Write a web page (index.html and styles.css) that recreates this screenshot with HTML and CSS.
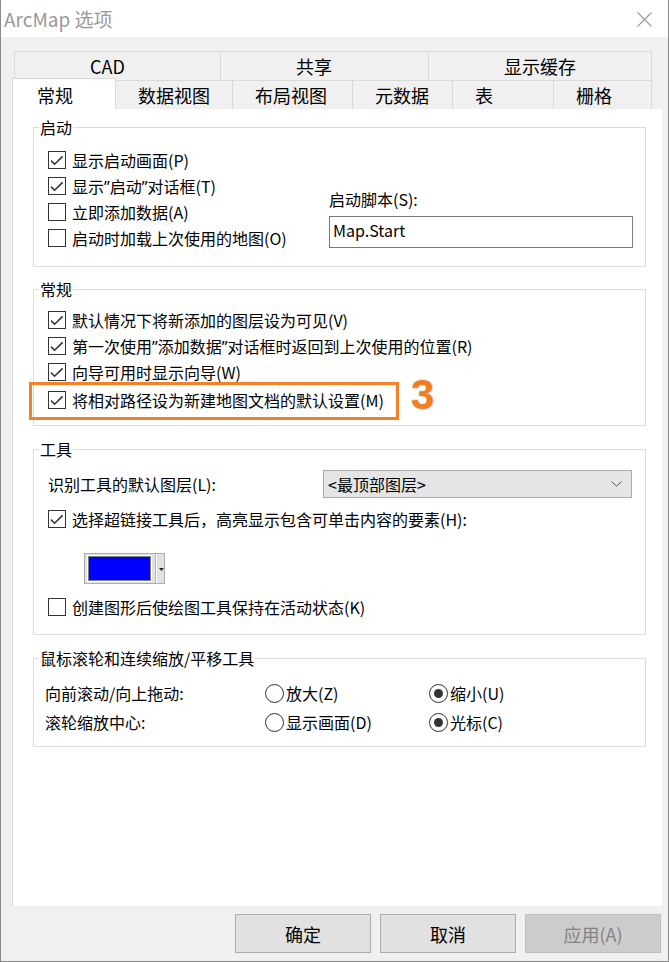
FILE: index.html
```html
<!DOCTYPE html>
<html lang="zh-CN">
<head>
<meta charset="utf-8">
<title>ArcMap 选项</title>
<link rel="stylesheet" href="styles.css">
</head>
<body>
<div class="window">
  <div class="titlebar">
    <span class="title">ArcMap 选项</span>
    <svg class="close" width="15" height="15" viewBox="0 0 15 15"><path d="M0.5 0.5 L14.5 14.5 M14.5 0.5 L0.5 14.5" stroke="#9a9a9a" stroke-width="1.1" fill="none"/></svg>
  </div>
  <div class="client">
    <div class="tabrow row1">
      <div class="tab first w-cad">CAD</div>
      <div class="tab w-share">共享</div>
      <div class="tab w-cache">显示缓存</div>
    </div>
    <div class="tabrow row2">
      <div class="tab first active w-general">常规</div>
      <div class="tab w-dataview">数据视图</div>
      <div class="tab w-layout">布局视图</div>
      <div class="tab w-meta">元数据</div>
      <div class="tab w-table">表</div>
      <div class="tab w-raster">栅格</div>
    </div>
    <div class="panel">
      <fieldset class="group g-startup">
        <legend>启动</legend>
        <div class="group-body startup-body">
          <div class="col-left">
            <div class="cb-row"><span class="cb checked"><svg width="16" height="16" viewBox="0 0 16 16"><path d="M2 8.6 L5.6 12.2 L13.6 4.4" stroke="#333" stroke-width="1.6" fill="none"/></svg></span><span>显示启动画面(P)</span></div>
            <div class="cb-row"><span class="cb checked"><svg width="16" height="16" viewBox="0 0 16 16"><path d="M2 8.6 L5.6 12.2 L13.6 4.4" stroke="#333" stroke-width="1.6" fill="none"/></svg></span><span>显示<span class="q">”</span>启动<span class="q">”</span>对话框(T)</span></div>
            <div class="cb-row"><span class="cb"></span><span>立即添加数据(A)</span></div>
            <div class="cb-row"><span class="cb"></span><span>启动时加载上次使用的地图(O)</span></div>
          </div>
          <div class="col-right">
            <div class="field-label">启动脚本(S):</div>
            <div class="textbox">Map.Start</div>
          </div>
        </div>
      </fieldset>

      <fieldset class="group g-general">
        <legend>常规</legend>
        <div class="group-body general-body">
          <div class="cb-row"><span class="cb checked"><svg width="16" height="16" viewBox="0 0 16 16"><path d="M2 8.6 L5.6 12.2 L13.6 4.4" stroke="#333" stroke-width="1.6" fill="none"/></svg></span><span>默认情况下将新添加的图层设为可见(V)</span></div>
          <div class="cb-row"><span class="cb checked"><svg width="16" height="16" viewBox="0 0 16 16"><path d="M2 8.6 L5.6 12.2 L13.6 4.4" stroke="#333" stroke-width="1.6" fill="none"/></svg></span><span>第一次使用<span class="q">”</span>添加数据<span class="q">”</span>对话框时返回到上次使用的位置(R)</span></div>
          <div class="cb-row"><span class="cb checked"><svg width="16" height="16" viewBox="0 0 16 16"><path d="M2 8.6 L5.6 12.2 L13.6 4.4" stroke="#333" stroke-width="1.6" fill="none"/></svg></span><span>向导可用时显示向导(W)</span></div>
          <div class="cb-row highlighted-row">
            <span class="cb checked"><svg width="16" height="16" viewBox="0 0 16 16"><path d="M2 8.6 L5.6 12.2 L13.6 4.4" stroke="#333" stroke-width="1.6" fill="none"/></svg></span><span>将相对路径设为新建地图文档的默认设置(M)</span>
            <span class="highlight"></span>
            <span class="step">3</span>
          </div>
        </div>
      </fieldset>

      <fieldset class="group g-tools">
        <legend>工具</legend>
        <div class="group-body tools-body">
          <div class="select-row">
            <span class="select-label">识别工具的默认图层(L):</span>
            <div class="select"><span>&lt;最顶部图层&gt;</span><svg width="11" height="6" viewBox="0 0 11 6"><path d="M0.5 0.5 L5.5 5.2 L10.5 0.5" stroke="#555" stroke-width="1" fill="none"/></svg></div>
          </div>
          <div class="cb-row row-link"><span class="cb checked"><svg width="16" height="16" viewBox="0 0 16 16"><path d="M2 8.6 L5.6 12.2 L13.6 4.4" stroke="#333" stroke-width="1.6" fill="none"/></svg></span><span>选择超链接工具后，高亮显示包含可单击内容的要素(H):</span></div>
          <div class="color-btn">
            <span class="swatch"></span>
            <span class="divider"></span>
            <svg class="arrow" width="5" height="3" viewBox="0 0 5 3"><path d="M0 0 L5 0 L2.5 3 Z" fill="#222"/></svg>
          </div>
          <div class="cb-row row-keep"><span class="cb"></span><span>创建图形后使绘图工具保持在活动状态(K)</span></div>
        </div>
      </fieldset>

      <fieldset class="group g-wheel">
        <legend>鼠标滚轮和连续缩放/平移工具</legend>
        <div class="group-body wheel-body">
          <div class="radio-row">
            <span class="radio-label">向前滚动/向上拖动:</span>
            <span class="radio-opt"><span class="radio"></span>放大(Z)</span>
            <span class="radio-opt"><span class="radio on"></span>缩小(U)</span>
          </div>
          <div class="radio-row second">
            <span class="radio-label">滚轮缩放中心:</span>
            <span class="radio-opt"><span class="radio"></span>显示画面(D)</span>
            <span class="radio-opt"><span class="radio on"></span>光标(C)</span>
          </div>
        </div>
      </fieldset>
    </div>
    <div class="footer">
      <button class="btn">确定</button>
      <button class="btn">取消</button>
      <button class="btn disabled">应用(A)</button>
    </div>
  </div>
</div>
</body>
</html>
```

FILE: styles.css
```css
* { box-sizing: border-box; }
html, body { margin: 0; padding: 0; background: #ffffff; }
body {
  font-family: "Noto Sans CJK SC", "Noto Sans", sans-serif;
  font-size: 16px;
  color: #000;
}
.window {
  width: 669px;
  height: 962px;
  border-left: 1px solid #8a8a8a;
  border-right: 1px solid #8a8a8a;
  border-bottom: 1px solid #8a8a8a;
  background: #f0f0f0;
  overflow: hidden;
}
.titlebar {
  height: 37px;
  background: #ffffff;
  display: flex;
  align-items: center;
  justify-content: space-between;
  padding: 0 16px 0 3px;
}
.title {
  font-size: 19px;
  color: #999999;
  line-height: 37px;
}
.close { display: block; margin-top: 1px; }

.client {
  height: 924px;
  padding-top: 14px;
}
.tabrow { display: flex; }
.row1 { margin-left: 13px; height: 29px; }
.row2 { margin-left: 11px; height: 31px; margin-top: -2px; align-items: flex-end; }
.tab {
  height: 29px;
  border-top: 1px solid #d9d9d9;
  border-right: 1px solid #d9d9d9;
  background: #f0f0f0;
  font-size: 18px;
  line-height: 28px;
  white-space: nowrap;
}
.tab.first { border-left: 1px solid #d9d9d9; }
.row1 .tab { padding-left: 75px; }
.row2 .tab { padding-left: 22px; }
.tab.active {
  height: 31px;
  background: #ffffff;
  padding-top: 2px;
  padding-left: 24px;
  position: relative;
  z-index: 1;
}
.w-cad { width: 207px; }
.w-share { width: 208px; }
.w-cache { width: 223px; }
.w-general { width: 104px; }
.w-dataview { width: 117px; }
.w-layout { width: 120px; }
.w-meta { width: 100px; }
.w-table { width: 101px; }
.w-raster { width: 98px; }

.panel {
  margin-left: 11px;
  width: 650px;
  height: 797px;
  background: #ffffff;
  border-left: 1px solid #d9d9d9;
  padding: 9px 0 0 20px;
}

.group {
  width: 613px;
  margin: 0;
  border: 1px solid #dcdcdc;
  padding: 0 0 0 5px;
  min-width: 0;
}
.group legend {
  font-size: 16px;
  line-height: 18px;
  padding: 0 1px;
}
.group-body { margin-left: 9px; }

.g-general { margin-top: 13px; }
.g-tools { margin-top: 14px; }
.g-wheel { margin-top: 14px; }

.startup-body { display: flex; padding: 11px 0 15px; }
.col-left { width: 281px; }
.col-right { width: 304px; padding-top: 39px; }
.field-label { line-height: 26px; height: 26px; }
.textbox {
  margin-top: 4px;
  height: 32px;
  border: 1px solid #7a7a7a;
  padding: 2px 3px 0;
  line-height: 22px;
  background: #fff;
}

.cb-row {
  display: flex;
  align-items: center;
  height: 26px;
  line-height: 26px;
  white-space: nowrap;
}
.cb {
  width: 18px;
  height: 18px;
  border: 1px solid #333333;
  background: #ffffff;
  margin-right: 6px;
  flex: none;
}
.cb svg { display: block; }
.q { font-family: "Noto Sans", sans-serif; }

.general-body { padding: 9px 0 12px; }
.highlighted-row { position: relative; margin-top: 2px; }
.highlight {
  position: absolute;
  left: -19px;
  top: -5px;
  width: 370px;
  height: 38px;
  border: 3px solid #f58025;
}
.step {
  position: absolute;
  left: 363px;
  top: -13px;
  font-family: "Liberation Sans", Arial, sans-serif;
  font-weight: bold;
  font-size: 42px;
  line-height: 42px;
  color: #f47b20;
  text-shadow: 1px 0 0 #e6e6e6, -1px 0 0 #e6e6e6, 0 1px 0 #e6e6e6, 0 -1px 0 #e6e6e6;
}

.tools-body { padding: 12px 0 14px; }
.select-row { display: flex; align-items: center; height: 28px; }
.select-label { width: 275px; line-height: 26px; }
.select {
  width: 309px;
  height: 28px;
  background: #e5e5e5;
  border: 1px solid #adadad;
  display: flex;
  align-items: center;
  justify-content: space-between;
  padding: 0 9px 0 4px;
  line-height: 26px;
}
.select svg { display: block; }
.row-link { margin-top: 8px; }
.color-btn {
  margin-top: 21px;
  margin-left: 36px;
  width: 81px;
  height: 31px;
  background: #e1e1e1;
  border: 1px solid #adadad;
  display: flex;
  align-items: center;
  padding-left: 3px;
}
.swatch {
  width: 64px;
  height: 25px;
  background: #0000ff;
  border: 1px solid #808080;
  outline: 1px solid #ffffff;
}
.divider {
  width: 1px;
  height: 29px;
  background: #b4b4b4;
  margin-left: 4px;
  box-shadow: 1px 0 0 #ffffff;
}
.arrow { margin-left: 3px; margin-top: 2px; }
.row-keep { margin-top: 10px; }

.wheel-body { padding: 13px 0 11px; }
.radio-row {
  display: flex;
  align-items: center;
  height: 26px;
  line-height: 26px;
  white-space: nowrap;
}
.radio-row.second { margin-top: 3px; }
.radio-label { width: 217px; margin-left: -3px; padding-right: 0; }
.radio-label + .radio-opt { margin-left: 3px; }
.radio-opt { display: flex; align-items: center; width: 164px; }
.radio {
  width: 19px;
  height: 19px;
  border: 1px solid #333333;
  border-radius: 50%;
  background: #fff;
  margin-right: 2px;
  display: flex;
  align-items: center;
  justify-content: center;
  flex: none;
}
.radio.on::after {
  content: "";
  width: 9px;
  height: 9px;
  border-radius: 50%;
  background: #333333;
}

.footer {
  display: flex;
  justify-content: flex-end;
  gap: 9px;
  padding: 8px 7px 0 0;
}
.btn {
  width: 136px;
  height: 39px;
  background: #e1e1e1;
  border: 1px solid #adadad;
  font-family: "Noto Sans CJK SC", "Noto Sans", sans-serif;
  font-size: 18px;
  color: #000;
  padding: 0;
  margin: 0;
}
.btn.disabled {
  background: #cccccc;
  border-color: #bfbfbf;
  color: #838383;
}
```
